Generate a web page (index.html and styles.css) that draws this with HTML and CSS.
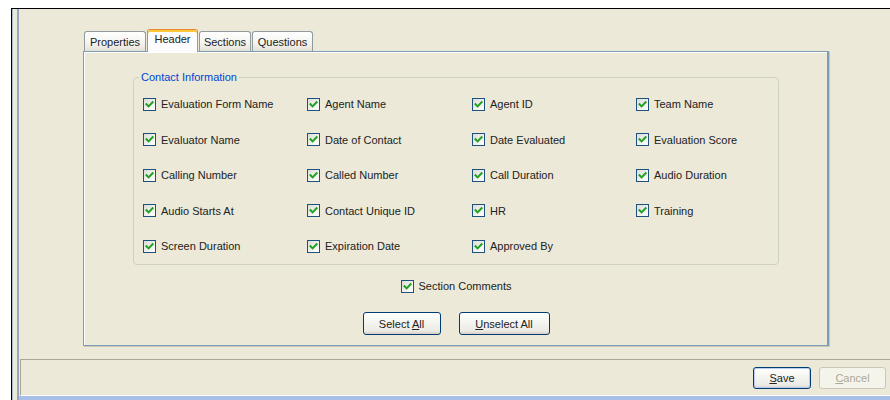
FILE: index.html
```html
<!DOCTYPE html>
<html lang="en">
<head>
<meta charset="utf-8">
<title>Evaluation Form – Header</title>
<link rel="stylesheet" href="styles.css">
</head>
<body>
<svg class="defs" width="0" height="0" aria-hidden="true">
  <symbol id="tick" viewBox="0 0 11 11">
    <path d="M2.5 5.2 L4.6 7.4 L8.6 3.2" fill="none" stroke="#21A121" stroke-width="2" stroke-linecap="square"/>
  </symbol>
</svg>

<div class="window">
  <div class="pane">
    <div class="main">
      <div class="tabs">
        <div class="tab tab-properties">Properties</div>
        <div class="tab tab-header is-active">Header</div>
        <div class="tab tab-sections">Sections</div>
        <div class="tab tab-questions">Questions</div>
      </div>

      <div class="tab-panel">
        <fieldset class="group">
          <legend>Contact Information</legend>
          <div class="field-grid">
            <label class="check"><span class="box"><svg><use href="#tick"/></svg></span>Evaluation Form Name</label>
            <label class="check"><span class="box"><svg><use href="#tick"/></svg></span>Agent Name</label>
            <label class="check"><span class="box"><svg><use href="#tick"/></svg></span>Agent ID</label>
            <label class="check"><span class="box"><svg><use href="#tick"/></svg></span>Team Name</label>

            <label class="check"><span class="box"><svg><use href="#tick"/></svg></span>Evaluator Name</label>
            <label class="check"><span class="box"><svg><use href="#tick"/></svg></span>Date of Contact</label>
            <label class="check"><span class="box"><svg><use href="#tick"/></svg></span>Date Evaluated</label>
            <label class="check"><span class="box"><svg><use href="#tick"/></svg></span>Evaluation Score</label>

            <label class="check"><span class="box"><svg><use href="#tick"/></svg></span>Calling Number</label>
            <label class="check"><span class="box"><svg><use href="#tick"/></svg></span>Called Number</label>
            <label class="check"><span class="box"><svg><use href="#tick"/></svg></span>Call Duration</label>
            <label class="check"><span class="box"><svg><use href="#tick"/></svg></span>Audio Duration</label>

            <label class="check"><span class="box"><svg><use href="#tick"/></svg></span>Audio Starts At</label>
            <label class="check"><span class="box"><svg><use href="#tick"/></svg></span>Contact Unique ID</label>
            <label class="check"><span class="box"><svg><use href="#tick"/></svg></span>HR</label>
            <label class="check"><span class="box"><svg><use href="#tick"/></svg></span>Training</label>

            <label class="check"><span class="box"><svg><use href="#tick"/></svg></span>Screen Duration</label>
            <label class="check"><span class="box"><svg><use href="#tick"/></svg></span>Expiration Date</label>
            <label class="check"><span class="box"><svg><use href="#tick"/></svg></span>Approved By</label>
          </div>
        </fieldset>

        <div class="extra">
          <label class="check"><span class="box"><svg><use href="#tick"/></svg></span>Section Comments</label>
        </div>

        <div class="actions">
          <button class="btn btn-select">Select <u>A</u>ll</button>
          <button class="btn btn-unselect"><u>U</u>nselect All</button>
        </div>
      </div>
    </div>

    <div class="footer">
      <button class="btn btn-save is-default"><u>S</u>ave</button>
      <button class="btn btn-cancel" disabled><u>C</u>ancel</button>
    </div>
    <div class="status-line"></div>
  </div>
</div>
</body>
</html>
```

FILE: styles.css
```css
* {
  box-sizing: border-box;
}

html, body {
  margin: 0;
  padding: 0;
  background: #ffffff;
  overflow: hidden;
}

body {
  font-family: "Liberation Sans", Arial, sans-serif;
  font-size: 11px;
  color: #222222;
}

.defs {
  position: absolute;
  width: 0;
  height: 0;
}

/* outer dialog frame */
.window {
  margin: 8px 0 0 11px;
  height: 392px;
  border-top: 1px solid #000000;
  border-left: 1px solid #000000;
  background: #ECE9D8;
  padding-left: 5px;
  box-shadow: inset 1px 0 0 #A9B9CE;
}

.pane {
  height: 100%;
  border-left: 2px solid #93A7C2;
  display: flex;
  flex-direction: column;
}

.main {
  height: 350px;
  padding: 20px 0 0 64px;
  flex: none;
}

/* tab strip */
.tabs {
  display: flex;
  align-items: flex-end;
  gap: 1px;
  height: 22px;
  padding-left: 1px;
}

.tab {
  height: 20px;
  border: 1px solid #919B9C;
  border-bottom: none;
  border-radius: 3px 3px 0 0;
  background: linear-gradient(#FFFFFF, #F3F3EF 60%, #E4E1D6);
  text-align: center;
  line-height: 20px;
  white-space: nowrap;
}

.tab-properties { width: 62px; }
.tab-header { width: 51px; }
.tab-sections { width: 52px; }
.tab-questions { width: 61px; }

.tab.is-active {
  height: 23px;
  margin-bottom: -1px;
  position: relative;
  z-index: 1;
  background: #FCFCFE;
  border-top: 1px solid #E68B2C;
  box-shadow: inset 0 2px 0 #FFC73C;
  line-height: 18px;
}

/* tab page */
.tab-panel {
  width: 746px;
  height: 295px;
  border: 1px solid #7F9DB9;
  border-right-width: 2px;
  background: #ECE9D8;
  box-shadow: inset 1px 1px 0 #FFFFFF, 1px 1px 0 #C9C6B6;
  padding: 19px 48px 0 49px;
}

.group {
  margin: 0;
  border: 1px solid #D0D0BF;
  border-radius: 4px;
  padding: 12px 0 10px 5px;
  min-inline-size: 0;
}

.group legend {
  color: #0046D5;
  padding: 0 2px;
  line-height: 13px;
}

.field-grid {
  display: grid;
  grid-template-columns: 164px 165px 164px 164px;
  grid-auto-rows: 16px;
  row-gap: 19.5px;
  padding-left: 4px;
}

.check {
  display: flex;
  align-items: center;
  gap: 5px;
  white-space: nowrap;
  height: 16px;
}

.box {
  flex: none;
  width: 13px;
  height: 13px;
  border: 1px solid #1C5180;
  background: linear-gradient(135deg, #DCDCD7, #F6F6F3 70%, #FFFFFF);
  display: block;
}

.box svg {
  display: block;
  width: 11px;
  height: 11px;
}

.extra {
  display: flex;
  justify-content: center;
  margin-top: 13px;
}

.actions {
  display: flex;
  justify-content: center;
  gap: 18px;
  margin-top: 18px;
}

/* push buttons */
.btn {
  font-family: inherit;
  font-size: 11px;
  color: #222222;
  height: 23px;
  padding: 0;
  border: 1px solid #003C74;
  border-radius: 3px;
  background: linear-gradient(#FFFFFF, #F4F4F0 45%, #ECEBE6 85%, #D6D0C5);
  white-space: nowrap;
}

.btn u {
  text-decoration: underline;
}

.btn-select { width: 78px; }
.btn-unselect { width: 91px; }

.footer {
  height: 37px;
  flex: none;
  margin-left: 1px;
  border-top: 1px solid #A8A697;
  border-left: 1px solid #A8A697;
  border-bottom: 1px solid #FFFFFF;
  display: flex;
  justify-content: flex-end;
  gap: 8px;
  padding: 7px 4px 0 0;
}

.btn-save {
  width: 58px;
  height: 22px;
}

.btn.is-default {
  box-shadow: inset 0 0 0 1px #B9CDEE;
}

.btn-cancel {
  width: 67px;
  height: 22px;
  border-color: #C9C7BA;
  background: #F5F4EA;
  color: #ACA899;
}

.status-line {
  flex: 1;
  background: #A8C0E8;
}
```
